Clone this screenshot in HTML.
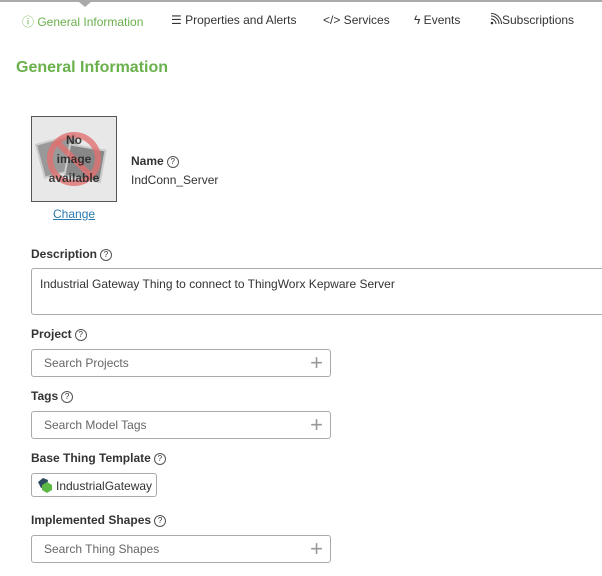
<!DOCTYPE html>
<html><head><style>
body{margin:0;width:602px;height:576px;overflow:hidden;background:#fff;font-family:"Liberation Sans",Arial,sans-serif;color:#333;position:relative}
.a{position:absolute;white-space:nowrap}
.tab{font-size:12px;top:13px;color:#333}
.lbl{font-size:12px;font-weight:bold;color:#333}
.q{display:inline-block;width:10px;height:10px;border:1px solid #555;border-radius:50%;font-size:8px;line-height:10px;text-align:center;font-weight:normal;vertical-align:1px;margin-left:3px}
.inp{position:absolute;left:31px;width:300px;height:26px;border:1px solid #aaa;border-radius:3px;box-sizing:border-box}
.inp span{position:absolute;left:12px;top:6px;font-size:12px;color:#666}
.inp b{position:absolute;right:7px;top:0px;font-size:22px;font-weight:normal;color:#999}
</style></head><body>
<div class="a" style="left:0;top:0;width:602px;height:2px;background:#aaa"></div>
<div class="a" style="left:79px;top:2px;width:0;height:0;border-left:6px solid transparent;border-right:6px solid transparent;border-top:5px solid #aaa"></div>
<div class="a tab" style="left:22px;color:#6ab04c">ⓘ General Information</div>
<div class="a tab" style="left:171px">☰ Properties and Alerts</div>
<div class="a tab" style="left:323px">&lt;/&gt; Services</div>
<div class="a tab" style="left:414px">ϟ Events</div>
<div class="a tab" style="left:490px"><svg width="12" height="12" style="vertical-align:-1px"><circle cx="2" cy="10" r="1.3" fill="#333"/><path d="M1 6a5 5 0 0 1 5 5M1 3a8 8 0 0 1 8 8M1 0.5a10.5 10.5 0 0 1 10.5 10.5" fill="none" stroke="#333" stroke-width="1"/></svg>Subscriptions</div>
<div class="a" style="left:16px;top:59px;font-size:16px;font-weight:bold;color:#6ab04c">General Information</div>
<div class="a" style="left:31px;top:116px;width:86px;height:86px;border:1px solid #555;background:#e8e8e8;box-sizing:border-box;overflow:hidden">
<svg width="84" height="84" style="position:absolute;left:0;top:0"><rect x="8" y="22" width="40" height="34" fill="#999" stroke="#ccc" stroke-width="2" transform="rotate(-15 28 40)"/><rect x="35" y="30" width="36" height="32" fill="#888" stroke="#ccc" stroke-width="2" transform="rotate(10 52 46)"/><circle cx="42" cy="42" r="24" fill="none" stroke="#e07070" stroke-width="6" opacity=".8"/><line x1="25" y1="25" x2="59" y2="59" stroke="#e07070" stroke-width="6" opacity=".8"/></svg>
<div style="position:absolute;left:0;right:0;top:14px;text-align:center;font-size:12px;line-height:19px;color:#222;font-weight:bold;opacity:.85">No<br>image<br>available</div></div>
<div class="a lbl" style="left:131px;top:154px">Name<span class="q">?</span></div>
<div class="a" style="left:131px;top:173px;font-size:12px">IndConn_Server</div>
<div class="a" style="left:53px;top:207px;font-size:12px;color:#2a7ab0;text-decoration:underline">Change</div>
<div class="a lbl" style="left:31px;top:247px">Description<span class="q">?</span></div>
<div class="a" style="left:31px;top:268px;width:590px;height:47px;border:1px solid #aaa;border-radius:3px;box-sizing:border-box"><span style="position:absolute;left:8px;top:8px;font-size:12px">Industrial Gateway Thing to connect to ThingWorx Kepware Server</span></div>
<div class="a lbl" style="left:31px;top:327px">Project<span class="q">?</span></div>
<div class="inp" style="top:349px;height:28px"><span>Search Projects</span><b>+</b></div>
<div class="a lbl" style="left:31px;top:389px">Tags<span class="q">?</span></div>
<div class="inp" style="top:411px;height:28px"><span>Search Model Tags</span><b>+</b></div>
<div class="a lbl" style="left:31px;top:451px">Base Thing Template<span class="q">?</span></div>
<div class="a" style="left:31px;top:473px;width:126px;height:24px;border:1px solid #aaa;border-radius:3px;box-sizing:border-box">
<svg width="18" height="18" style="position:absolute;left:4px;top:3px"><polygon points="2,5 7,1 12,3 11,9 5,11" fill="#2d4a5e"/><polygon points="6,8 11,5 16,8 16,13 11,16 6,13" fill="#5cb946"/></svg>
<span style="position:absolute;left:24px;top:5px;font-size:12px">IndustrialGateway</span></div>
<div class="a lbl" style="left:31px;top:513px">Implemented Shapes<span class="q">?</span></div>
<div class="inp" style="top:535px;height:28px"><span>Search Thing Shapes</span><b>+</b></div>
</body></html>
